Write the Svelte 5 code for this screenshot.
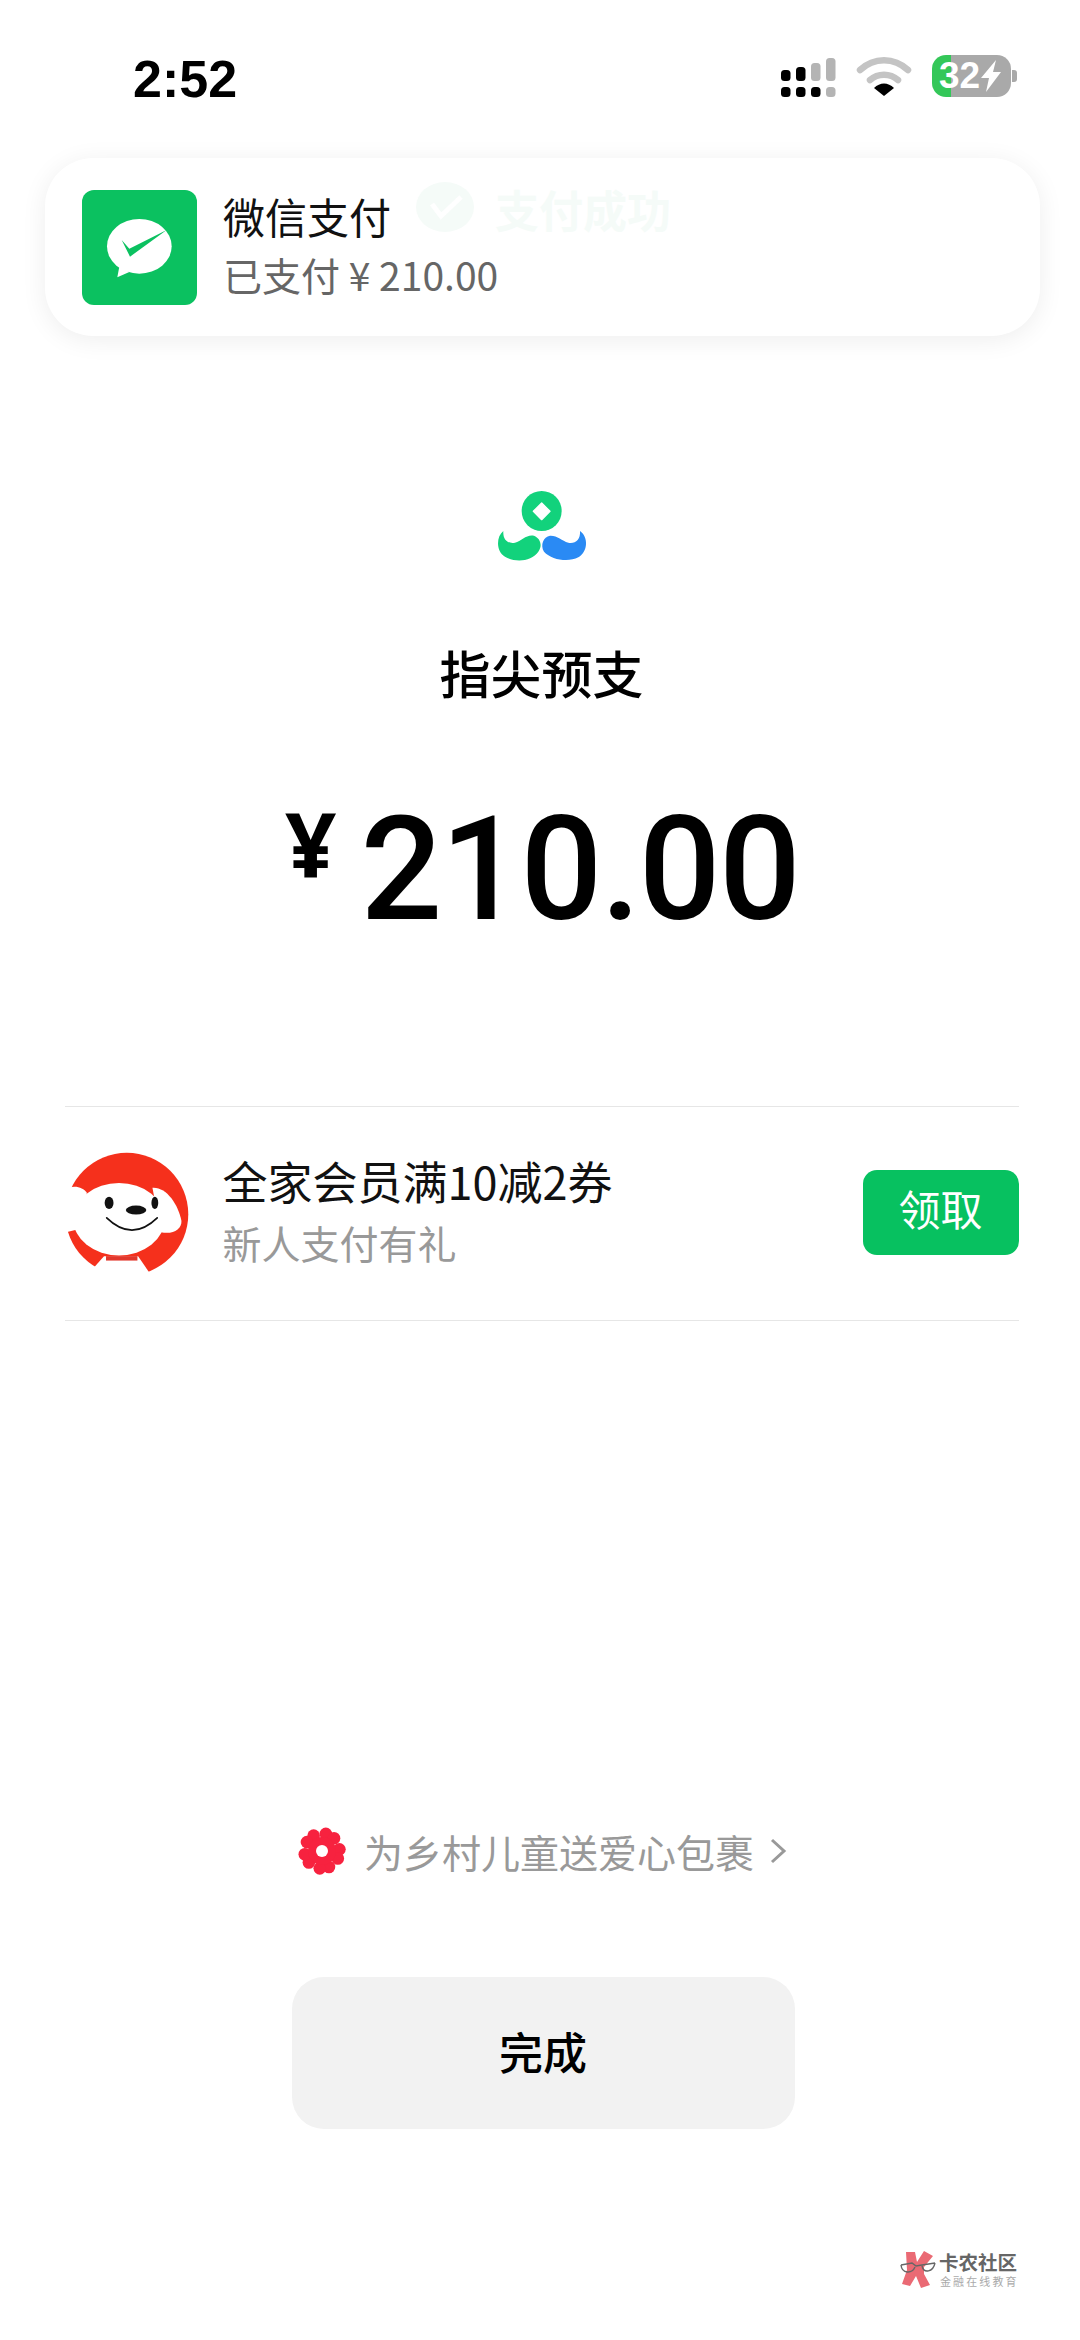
<script>
  const signal = [
    { x: 40, top: 38, black: true },
    { x: 55, top: 35, black: true },
    { x: 70, top: 31, black: false },
    { x: 85, top: 26, black: false }
  ];

  // flower lobes: five petals, each with two bumps
  const lobes = [];
  for (let i = 0; i < 5; i++) {
    const a = (i * 72 - 90 - 8) * Math.PI / 180;
    for (const d of [-0.36, 0.36]) {
      lobes.push({ x: 24 + 17.5 * Math.cos(a + d), y: 24 + 17.5 * Math.sin(a + d) });
    }
  }
</script>

<div class="page">
  <header class="status">
    <span class="time">2:52</span>
    <div class="status-icons">
      <svg class="signal" width="60" height="44" viewBox="36 22 60 44">
        {#each signal as bar, i}
          <rect x={bar.x} y={bar.top} width="9.5" height={49 - bar.top} rx="3.5" fill={bar.black ? "#000" : "#b4b4b4"} />
          <rect x={bar.x} y="55" width="9.5" height="10" rx="3.5" fill={i === 3 ? "#b4b4b4" : "#000"} />
        {/each}
      </svg>
      <svg class="wifi" width="56" height="42" viewBox="0 0 56 42">
        <path d="M4 15 C18 2 38 2 52 15" fill="none" stroke="#c4c4c4" stroke-width="6.5" stroke-linecap="round" />
        <path d="M14 25 C22 18 34 18 42 25" fill="none" stroke="#c4c4c4" stroke-width="6.5" stroke-linecap="round" />
        <path d="M18 33 C24 27 32 27 38 33 L28 41 Z" fill="#000" />
      </svg>
      <div class="battery">
        <div class="cell">
          <span class="level">32</span>
          <svg width="22" height="32" viewBox="0 0 22 32"><path d="M16 0 L1 18 L9 18 L6 32 L21 12 L13 12 Z" fill="#fff" /></svg>
        </div>
        <div class="nub"></div>
      </div>
    </div>
  </header>

  <section class="notice">
    <div class="ghost">
      <svg width="60" height="60" viewBox="0 0 60 60">
        <ellipse cx="30" cy="28" rx="29" ry="25" fill="#f5fbf8" />
        <path d="M17 25 L26 37 L46 18" fill="none" stroke="#fff" stroke-width="5" />
      </svg>
      <span>支付成功</span>
    </div>
    <svg class="wechat" width="115" height="115" viewBox="66 58 345 345">
      <rect x="66" y="58" width="345" height="345" rx="36" fill="#0bc160" />
      <ellipse cx="238" cy="227" rx="97" ry="82" fill="#fff" />
      <path d="M172 320 L178 288 L208 304 Z" fill="#fff" />
      <path d="M185 208 L208 234 L320 178 L210 258 Z" fill="#0bc160" />
    </svg>
    <div class="notice-text">
      <div class="notice-title">微信支付</div>
      <div class="notice-sub">已支付 ¥ 210.00</div>
    </div>
  </section>

  <svg class="logo" width="140" height="110" viewBox="0 0 420 330">
    <circle cx="215" cy="123" r="60" fill="#12d27c" />
    <path d="M215 99 L240 124 L215 149 L190 124 Z" fill="#fff" stroke="#fff" stroke-width="4" stroke-linejoin="round" />
    <path d="M100 183 C78 200 78 245 105 260 C135 278 185 275 205 245 C218 228 212 205 192 197 C170 192 155 212 135 218 C115 222 98 210 100 183 Z" fill="#12d27c" />
    <path d="M330 183 C355 200 355 245 325 262 C295 278 245 270 222 245 C210 225 220 200 240 197 C262 196 275 212 295 218 C315 222 332 210 330 183 Z" fill="#2a8af4" />
  </svg>

  <h1 class="payee">指尖预支</h1>

  <div class="amount">
    <span class="yen">¥</span>
    <span class="sum">210.00</span>
  </div>

  <section class="promo">
    <svg class="dog" width="127" height="128" viewBox="48 60 372 375">
      <circle cx="235" cy="245" r="180" fill="#f5301c" />
      <ellipse cx="212" cy="260" rx="134" ry="106" fill="#fff" />
      <path d="M48 178 C75 155 105 165 118 182 L90 290 L48 300 Z" fill="#fff" />
      <path d="M310 168 C350 165 385 215 395 265 C396 290 370 305 335 298 Z" fill="#fff" />
      <path d="M140 400 L168 368 L268 368 L300 415 C260 440 190 440 140 400 Z" fill="#fff" />
      <rect x="174" y="368" width="92" height="13" fill="#e2372c" />
      <ellipse cx="183" cy="212" rx="13" ry="18" fill="#111" />
      <ellipse cx="317" cy="212" rx="10" ry="18" fill="#111" />
      <ellipse cx="262" cy="233" rx="30" ry="13" fill="#111" />
      <path d="M176 256 Q250 328 324 256" fill="none" stroke="#111" stroke-width="5" stroke-linecap="round" />
    </svg>
    <div class="promo-text">
      <div class="promo-title">全家会员满10减2券</div>
      <div class="promo-sub">新人支付有礼</div>
    </div>
    <div class="claim">领取</div>
  </section>

  <div class="charity">
    <svg width="48" height="48" viewBox="0 0 48 48">
      <g fill="#f7223f">
        {#each lobes as lobe}
          <circle cx={lobe.x} cy={lobe.y} r="6.3" />
        {/each}
        <circle cx="24" cy="24" r="14" />
      </g>
      <circle cx="24" cy="24" r="6" fill="#fff" />
    </svg>
    <span>为乡村儿童送爱心包裹</span>
    <svg class="chev" width="18" height="28" viewBox="0 0 18 28">
      <path d="M3 3 L15 14 L3 25" fill="none" stroke="#999" stroke-width="3" />
    </svg>
  </div>

  <div class="done">完成</div>

  <div class="watermark">
    <svg width="36" height="38" viewBox="0 0 36 38">
      <path d="M6 2 L15 2 L17 12 L24 1 L33 6 L24 17 L24 24 L30 35 L21 38 L16 26 L10 36 L2 34 L7 20 Z" fill="#ea6a74" />
      <path d="M1 15 L12 13 L16 16 L22 15 L35 13 M1 15 C2 24 12 24 15 17 M22 16 C24 24 33 22 35 13" fill="none" stroke="#666" stroke-width="1.4" />
    </svg>
    <div class="wm-text">
      <div class="wm-name">卡农社区</div>
      <div class="wm-sub">金融在线教育</div>
    </div>
  </div>
</div>

<style>
  :global(body) {
    margin: 0;
    background: #fff;
  }

  .page {
    position: relative;
    width: 1080px;
    height: 2340px;
    overflow: hidden;
    background: #fff;
    display: flex;
    flex-direction: column;
    align-items: center;
    font-family: "Noto Sans CJK SC", "Noto Sans", sans-serif;
    color: #000;
  }

  .status {
    box-sizing: border-box;
    width: 100%;
    height: 158px;
    padding: 52px 63px 0 133px;
    display: flex;
    justify-content: space-between;
    align-items: flex-start;
  }

  .time {
    font-family: "Liberation Sans", sans-serif;
    font-size: 52px;
    line-height: 54px;
    font-weight: 700;
    letter-spacing: 0;
  }

  .status-icons {
    display: flex;
    align-items: flex-start;
    gap: 15px;
    margin-top: 3px;
  }

  .signal {
    margin-top: -1px;
    margin-right: 4px;
  }

  .wifi {
    margin-right: 5px;
  }

  .battery {
    display: flex;
    align-items: center;
    gap: 1px;
  }

  .cell {
    box-sizing: border-box;
    width: 79px;
    height: 42px;
    border-radius: 14px;
    background: linear-gradient(to right, #34c759 19px, #a9a9a9 19px);
    padding-left: 7px;
    display: flex;
    align-items: center;
    gap: 0;
  }

  .level {
    font-family: "Liberation Sans", sans-serif;
    font-size: 37px;
    font-weight: 700;
    color: #fff;
    line-height: 42px;
  }

  .nub {
    width: 5px;
    height: 12px;
    border-radius: 0 3px 3px 0;
    background: #a9a9a9;
  }

  .notice {
    position: relative;
    box-sizing: border-box;
    width: 995px;
    height: 178px;
    margin-left: 5px;
    padding: 32px 37px;
    border-radius: 48px;
    background: #fff;
    box-shadow: 0 4px 26px rgba(0, 0, 0, 0.07);
    display: flex;
    gap: 26px;
  }

  .ghost {
    position: absolute;
    left: 370px;
    top: 21px;
    display: flex;
    align-items: center;
    gap: 20px;
    font-size: 44px;
    font-weight: 700;
    line-height: 60px;
    color: #f5fbf8;
  }

  .notice-text {
    position: relative;
    display: flex;
    flex-direction: column;
    margin-top: 1px;
  }

  .notice-title {
    font-size: 42px;
    line-height: 50px;
    color: #111;
  }

  .notice-sub {
    margin-top: 8px;
    font-size: 39px;
    line-height: 50px;
    color: #666;
    white-space: nowrap;
  }

  .logo {
    margin-top: 134px;
  }

  .payee {
    margin: 57px 0 0 3px;
    font-size: 51px;
    line-height: 70px;
    font-weight: 500;
  }

  .amount {
    margin-top: 80px;
    margin-left: 4px;
    height: 170px;
    display: flex;
    align-items: flex-start;
    gap: 24px;
  }

  .yen {
    font-family: "Noto Sans", sans-serif;
    font-size: 90px;
    line-height: 112px;
    font-weight: 700;
  }

  .sum {
    font-family: Roboto, sans-serif;
    font-size: 144px;
    line-height: 166px;
    font-weight: 500;
    letter-spacing: -1.8px;
  }

  .promo {
    box-sizing: border-box;
    width: 954px;
    height: 215px;
    margin-top: 149px;
    margin-left: 3px;
    border-top: 1px solid #e6e6e6;
    border-bottom: 1px solid #e6e6e6;
    display: flex;
    align-items: center;
  }

  .dog {
    margin-left: -2px;
    margin-top: 3px;
  }

  .promo-text {
    margin-left: 33px;
    flex: 1;
    margin-top: -10px;
  }

  .promo-title {
    font-size: 45px;
    line-height: 60px;
    color: #111;
  }

  .promo-sub {
    margin-top: 6px;
    font-size: 39px;
    line-height: 50px;
    color: #999;
  }

  .claim {
    width: 156px;
    height: 85px;
    border-radius: 14px;
    background: #07c160;
    color: #fff;
    font-size: 42px;
    line-height: 76px;
    text-align: center;
    margin-top: -2px;
  }

  .charity {
    margin-top: 505px;
    margin-left: 5px;
    display: flex;
    align-items: center;
    gap: 18px;
    font-size: 39px;
    line-height: 50px;
    color: #999;
  }

  .chev {
    margin-left: -3px;
  }

  .done {
    width: 503px;
    height: 152px;
    margin-top: 101px;
    margin-left: 6px;
    border-radius: 32px;
    background: #f2f2f2;
    font-size: 44px;
    font-weight: 500;
    line-height: 148px;
    text-align: center;
  }

  .watermark {
    position: absolute;
    left: 900px;
    top: 2250px;
    display: flex;
    gap: 3px;
    align-items: flex-start;
  }

  .wm-name {
    font-size: 19.5px;
    line-height: 24px;
    font-weight: 700;
    color: #666;
  }

  .wm-sub {
    font-size: 11px;
    line-height: 14px;
    letter-spacing: 2.1px;
    color: #aaa;
    margin-left: 1px;
  }
</style>
